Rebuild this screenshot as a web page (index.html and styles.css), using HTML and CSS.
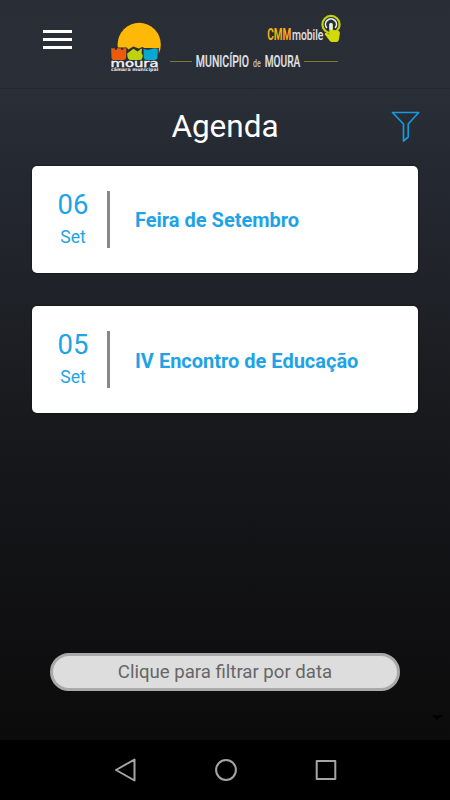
FILE: index.html
```html
<!DOCTYPE html>
<html lang="pt">
<head>
<meta charset="utf-8">
<title>Agenda</title>
<link rel="stylesheet" href="styles.css">
</head>
<body>
<div class="app">
  <header class="topbar">
    <div class="menu"><span></span><span></span><span></span></div>
    <svg class="brand" viewBox="108 12 236 64">
      <circle cx="139.2" cy="44.4" r="21.6" fill="#fdb808"/>
      <path d="M110.5 47.4h16.300l1.500 2 5-2.800 5.500 2 3.500-1.600 2 1h14.500v14h-48.300z" fill="#292e38"/>
      <path d="M111.200 48.200h3.600v1.500h2.200v-1.500h4v1.500h2.200v-1.500h3.200l-.3 9q-.2 2.800-3 2.800h-8.600q-2.800 0-3-2.800z" fill="#ea5c0c"/>
      <path d="M127.200 53.500l6.200-4.800 4.200 2.800 3.700-3 .6.400-.3 4.100 1.200 2.500q-.2 4.500-3 4.500h-9.600q-3 0-3-6.500z" fill="#bed20e"/>
      <path d="M143.600 48.800q3.500 1.800 7 .4 4-1.500 7.200-.4l-.3 8.400q-.2 2.800-3 2.800h-7.800q-2.800 0-3-2.800z" fill="#08a8d0"/>
      <rect x="110.500" y="60.200" width="48" height="11.800" fill="#292e38"/>
      <text class="moura" x="110.500" y="66.600" textLength="48" lengthAdjust="spacingAndGlyphs">moura</text>
      <text class="camara" x="110.900" y="71" textLength="47.400" lengthAdjust="spacingAndGlyphs">câmara municipal</text>
      <path d="M170 61.500h22M304 61.500h34" stroke="#7f8726" stroke-width=".9"/>
      <text class="town" x="195.800" y="66.800" textLength="53.300" lengthAdjust="spacingAndGlyphs">MUNICÍPIO</text>
      <text class="de" x="253" y="66.800" textLength="7.800" lengthAdjust="spacingAndGlyphs">de</text>
      <text class="town" x="264.700" y="66.800" textLength="35.600" lengthAdjust="spacingAndGlyphs">MOURA</text>
      <text class="cmm" x="267.200" y="39.800" textLength="24" lengthAdjust="spacingAndGlyphs">CMM</text>
      <text class="mobile" x="291.900" y="39.800" textLength="31.500" lengthAdjust="spacingAndGlyphs">mobile</text>
      <circle cx="331" cy="24.500" r="8.600" fill="#292e38" stroke="#c5d10c" stroke-width="2.200"/>
      <path d="M326.800 28a5.500 5.500 0 1 1 8.400 0" fill="none" stroke="#e2f1f4" stroke-width="1.700"/>
      <path d="M329.300 24.500q0-1.700 1.700-1.700t1.700 1.700v5.300l5.800 1.300q1.700.5 1.400 2.200l-1 6.200q-.4 2.500-2.500 2.500h-4.200q-1.700 0-2.700-1.500l-4.800-6.200q.3-2 2.500-1.200l2.100 1.300z" fill="#d2db08"/>
      <path d="M331 28.500v-4" stroke="#e2f1f4" stroke-width="3.200" stroke-linecap="round"/>
    </svg>
  </header>
  <div class="heading">
    <h1>Agenda</h1>
    <svg class="filter" viewBox="0 0 30 32"><path d="M1.500 1.500H27.700L17.200 13V26L12.500 30V13Z" fill="none" stroke="#149bdf" stroke-width="1.700" stroke-linejoin="round"/></svg>
  </div>
  <main class="list">
    <article class="card">
      <div class="date"><span class="day">06</span><span class="month">Set</span></div>
      <h2>Feira de Setembro</h2>
    </article>
    <article class="card">
      <div class="date"><span class="day">05</span><span class="month">Set</span></div>
      <h2>IV Encontro de Educação</h2>
    </article>
  </main>
  <button class="pick">Clique para filtrar por data</button>
  <svg class="caret" viewBox="0 0 12 5"><path d="M0 0h12L6 5z" fill="#020203"/></svg>
</div>
<nav class="navbar">
  <svg viewBox="0 0 24 24"><path d="M2 12L20.500 1.500V22.500Z"/></svg>
  <svg viewBox="0 0 24 24"><circle cx="12" cy="12" r="9.900"/></svg>
  <svg viewBox="0 0 24 24"><rect x="2.700" y="3" width="18.600" height="18"/></svg>
</nav>
</body>
</html>
```
FILE: styles.css
```css
* { box-sizing: border-box; }
body {
  margin: 0;
  width: 450px;
  height: 800px;
  display: flex;
  flex-direction: column;
  overflow: hidden;
  background: #000;
  font-family: Roboto, sans-serif;
}
.app {
  height: 740px;
  display: flex;
  flex-direction: column;
  position: relative;
  background: linear-gradient(#292d36 0, #292e37 90px, #252932 160px, #1f2228 290px, #17191c 425px, #101012 620px, #0b0b0b 740px);
}
.topbar {
  height: 89px;
  padding: 12px 0 0 43px;
  display: flex;
  align-items: flex-start;
  border-bottom: 1px solid #242831;
}
.menu {
  width: 28.5px;
  margin-top: 18px;
  display: flex;
  flex-direction: column;
  gap: 5px;
}
.menu span { height: 3px; background: #fff; }
.brand { width: 236px; height: 64px; margin-left: 36.5px; }
.moura { font: 9.6px "DejaVu Sans", sans-serif; fill: #f0f2f4; stroke: #f0f2f4; stroke-width: .4px; }
.camara { font: bold 4.6px "DejaVu Sans", sans-serif; fill: #e8eaed; }
.town { font: 500 17px Roboto, sans-serif; fill: #e0e2e4; stroke: #e0e2e4; stroke-width: .15px; }
.de { font: 500 10px Roboto, sans-serif; fill: #b9bcc1; }
.cmm { font: bold 16.8px Roboto, sans-serif; fill: #f9ae12; }
.mobile { font: 500 15px Roboto, sans-serif; fill: #e0e2e4; }
.heading {
  height: 76.5px;
  position: relative;
  display: flex;
  justify-content: center;
}
h1 {
  margin: 19px 0 0;
  font-size: 31.5px;
  line-height: 38px;
  font-weight: 400;
  color: #fff;
}
.filter { position: absolute; left: 391px; top: 22px; width: 30px; height: 32px; }
.list {
  padding: 0 32px;
  display: flex;
  flex-direction: column;
  gap: 33.9px;
}
.card {
  height: 107px;
  display: flex;
  align-items: center;
  background: #fff;
  border-radius: 5px;
  box-shadow: 0 0 2px #050608;
  color: #1ea3e6;
}
.date {
  width: 78px;
  height: 57px;
  border-right: 3px solid #888;
  display: flex;
  flex-direction: column;
  padding-left: 7px;
  align-items: center;
}
.day { font-size: 27.5px; line-height: 28px; }
.month { font-size: 17.6px; line-height: 22px; margin-top: 7px; }
h2 { margin: 2px 0 0 25px; font-size: 20px; line-height: 24px; font-weight: 700; }
.pick {
  width: 350px;
  height: 38px;
  margin: 240.1px 0 0 50px;
  padding: 0;
  border: 3px solid #a9a9a9;
  border-radius: 19px;
  background: #ddd;
  color: #666;
  font: 18.6px Roboto, sans-serif;
}
.caret { width: 12px; height: 5px; margin: 23.5px 7px 0 auto; }
.navbar {
  height: 60px;
  padding: 0 113px;
  display: flex;
  align-items: center;
  justify-content: space-between;
}
.navbar svg { width: 24px; height: 24px; fill: none; stroke: #a5a5a5; stroke-width: 2; stroke-linejoin: round; position: relative; left: .6px; }
```
